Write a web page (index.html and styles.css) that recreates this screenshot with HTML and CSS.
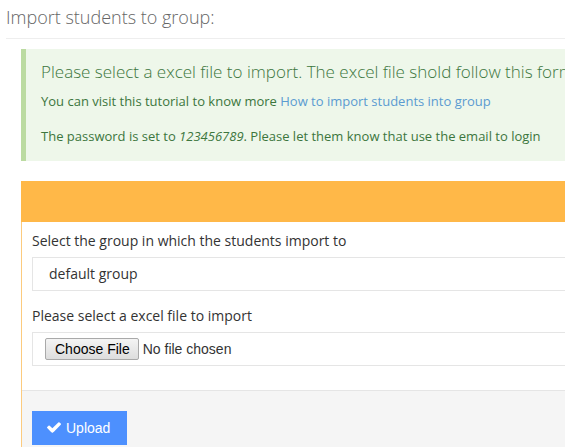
FILE: index.html
```html
<!DOCTYPE html>
<html lang="en">
<head>
<meta charset="utf-8">
<title>Import students to group</title>
<link rel="stylesheet" href="styles.css">
</head>
<body>
<div class="page">
  <h3 class="page-title">Import students to group:</h3>
  <div class="content">
    <div class="note">
      <h4 class="note-title">Please select a excel file to import. The excel file shold follow this format:</h4>
      <p class="note-line first">You can visit this tutorial to know more <a href="#" class="link">How to import students into group</a></p>
      <p class="note-line">The password is set to <i>123456789</i>. Please let them know that use the email to login</p>
    </div>
    <div class="portlet">
      <div class="portlet-title"></div>
      <form class="portlet-body">
        <div class="form-body">
          <div class="form-group">
            <label class="form-label" for="grp">Select the group in which the students import to</label>
            <select id="grp" class="form-control select"><option>default group</option></select>
          </div>
          <div class="form-group">
            <label class="form-label" for="file">Please select a excel file to import</label>
            <input id="file" type="file" class="form-control file">
          </div>
        </div>
        <div class="form-actions">
          <button type="button" class="btn-blue">
            <svg class="check" viewBox="121 334 1550 1188" aria-hidden="true"><path fill="#fff" d="M1671 566q0 40-28 68l-724 724-136 136q-28 28-68 28t-68-28l-136-136-362-362q-28-28-28-68t28-68l136-136q28-28 68-28t68 28l294 295 656-657q28-28 68-28t68 28l136 136q28 28 28 68z"/></svg>
            <span>Upload</span>
          </button>
        </div>
      </form>
    </div>
  </div>
</div>
</body>
</html>
```
FILE: styles.css
```css
html {
  overflow: hidden;
  background: #fff;
}
body {
  margin: 0;
  font-family: "Open Sans", sans-serif;
  font-size: 13px;
  color: #333;
}
.page {
  width: 1000px;
  padding-left: 6px;
}
.page-title {
  margin: 0;
  padding: 8px 0 10px;
  font-size: 18px;
  line-height: 19.8px;
  font-weight: 300;
  color: #666;
  border-bottom: 1px solid #eee;
}
.content {
  padding-left: 15px;
}
.note {
  margin-top: 10px;
  padding: 13px 30px 15px 15px;
  background: #eef7ea;
  border-left: 5px solid #bbdba1;
  color: #3c763d;
}
.note-title {
  margin: 0 0 10px;
  font-size: 17px;
  line-height: 19.8px;
  font-weight: 300;
  white-space: nowrap;
}
.note-line {
  margin: 0;
  line-height: 18.57px;
}
.note-line.first {
  margin-bottom: 17px;
}
.link {
  color: #5b9bd1;
  text-decoration: none;
}
.portlet {
  margin-top: 20px;
}
.portlet-title {
  height: 41px;
  background: #ffb848;
}
.portlet-body {
  display: block;
  margin: 0;
  border-left: 1px solid #fccb7e;
}
.form-body {
  padding: 9px 10px 9px;
}
.form-group {
  margin-bottom: 15px;
}
.form-label {
  display: block;
  margin-bottom: 6px;
  font-size: 14px;
  line-height: 20px;
  color: #333;
}
.form-control {
  display: block;
  box-sizing: border-box;
  width: 800px;
  height: 34px;
  margin: 0;
  border: 1px solid #e5e5e5;
  border-radius: 0;
  background: #fff;
  color: #333;
  outline: none;
}
.select {
  appearance: none;
  -webkit-appearance: none;
  padding: 0 16px;
  font-family: "Open Sans", sans-serif;
  font-size: 14px;
}
.file {
  padding: 5px 12px;
  font-family: "Liberation Sans", Arial, sans-serif;
  font-size: 14px;
  line-height: 20px;
}
.file::file-selector-button {
  box-sizing: border-box;
  height: 22px;
  margin: 0 4px 0 0;
  padding: 0 8px 0 9px;
  font-family: "Liberation Sans", Arial, sans-serif;
  font-size: 14px;
  color: #000;
  background: linear-gradient(#f4f4f4, #dddddd);
  border: 1px solid #a9a9a9;
  border-radius: 2px;
}
.form-actions {
  padding: 20px 10px 20px;
  background: #f5f5f5;
  border-top: 1px solid #e5e5e5;
}
.btn-blue {
  display: inline-flex;
  align-items: center;
  gap: 5px;
  height: 34px;
  padding: 0 17px 0 15px;
  border: 0;
  border-radius: 0;
  background: #4d90fe;
  color: #fff;
  font-family: "Liberation Sans", Arial, sans-serif;
  font-size: 14px;
  line-height: 20px;
}
.check {
  width: 14px;
  height: 11px;
}
```
